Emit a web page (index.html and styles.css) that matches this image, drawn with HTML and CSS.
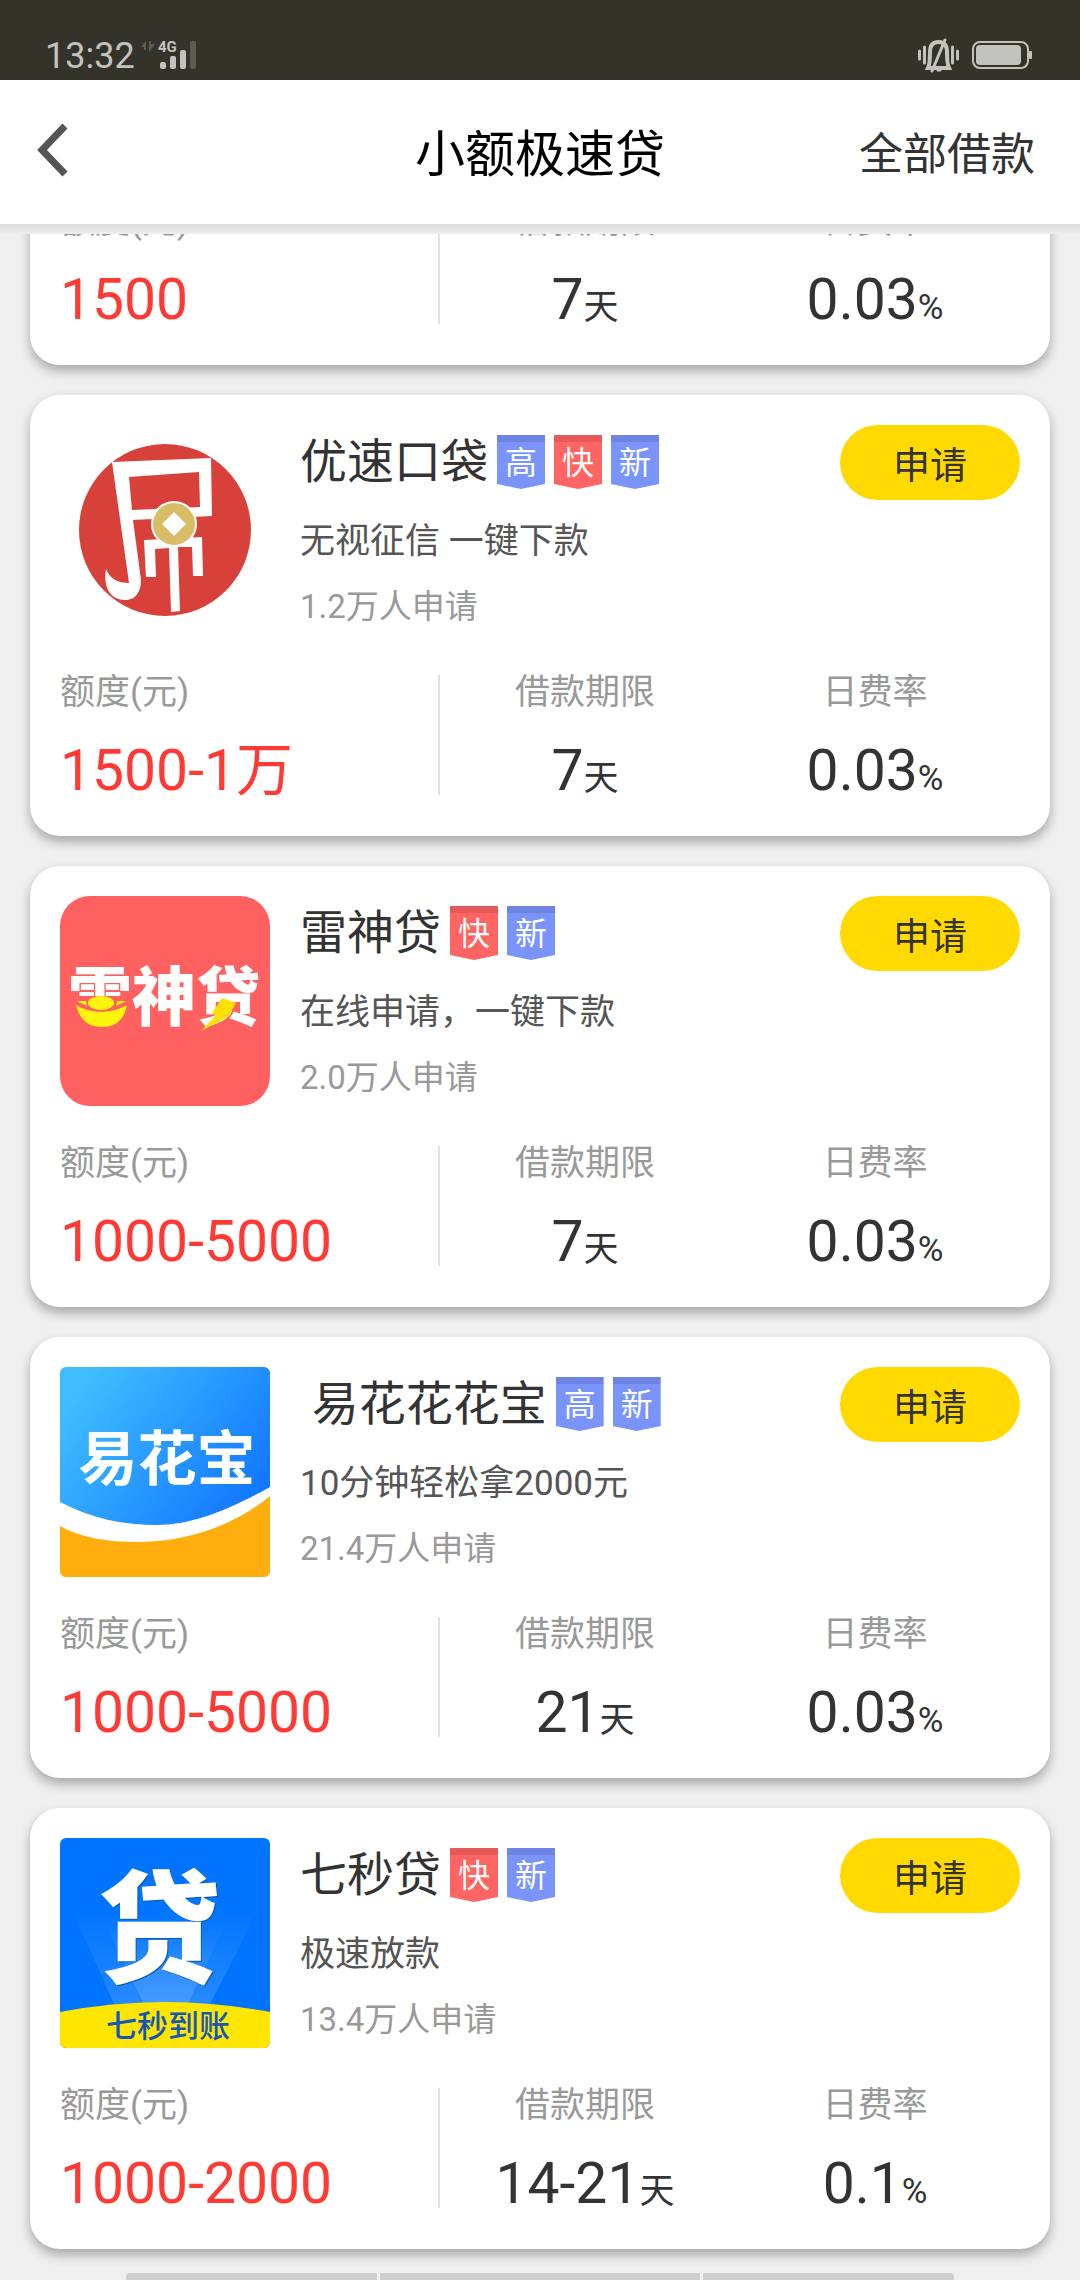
FILE: index.html
```html
<!DOCTYPE html>
<html lang="zh-CN">
<head>
    <meta charset="UTF-8">
    <meta name="viewport" content="width=device-width, initial-scale=1.0">
    <title>小额极速贷</title>
    <link rel="stylesheet" href="styles.css">
</head>
<body>
    <div class="status-bar">
        <span class="time">13:32</span>
        <svg class="signal" width="58" height="32" viewBox="0 0 58 32">
            <path d="M1 7L6 1V10H4V7ZM9 1H11V4H15L9 12Z" fill="#5c5c50"/>
            <text x="18" y="12" class="network">4G</text>
            <rect x="20" y="22" width="6" height="7" rx="2" fill="#c3c3be"/>
            <rect x="30" y="16" width="6" height="13" rx="2" fill="#c3c3be"/>
            <rect x="40" y="10" width="6" height="19" rx="2" fill="#c3c3be"/>
            <rect x="50" y="1" width="6" height="28" rx="2" fill="#5c5c50"/>
        </svg>
        <div class="status-right">
            <svg width="42" height="36" viewBox="0 0 42 36" fill="none" stroke="#c3c3be">
                <path d="M1.500 13V21M6.500 9V25M34.500 9V25M39.500 13V21" stroke-width="3" stroke-linecap="round"/>
                <path d="M10 30C12 26 12 20 12 14C12 7 15 4 20.500 4C26 4 29 7 29 14C29 20 29 26 31 30Z" stroke-width="4"/>
                <path d="M27 2L14 33M20 32H22" stroke-width="3" stroke-linecap="round"/>
            </svg>
            <svg width="61" height="30" viewBox="0 0 61 30">
                <rect x="1" y="1" width="55" height="26" rx="7" fill="none" stroke="#c3c3be" stroke-width="2"/>
                <rect x="4" y="4" width="45" height="20" rx="4" fill="#c3c3be"/>
                <rect x="57" y="10" width="3" height="8" rx="1" fill="#c3c3be"/>
            </svg>
        </div>
    </div>

    <header class="nav-bar">
        <button class="back-btn" aria-label="返回">
            <svg width="34" height="56" viewBox="0 0 34 56">
                <path d="M29 4L6 28L29 52" fill="none" stroke="#555" stroke-width="7"/>
            </svg>
        </button>
        <h1>小额极速贷</h1>
        <a class="all-link" href="#">全部借款</a>
    </header>
    <div class="nav-shadow"></div>

    <main class="loan-list">
        <section class="loan-card">
            <div class="stats">
                <div class="stat amount"><p class="label">额度(元)</p><p class="value">1500</p></div>
                <div class="stat"><p class="label">借款期限</p><p class="value">7<small>天</small></p></div>
                <div class="stat"><p class="label">日费率</p><p class="value">0.03<small>%</small></p></div>
            </div>
        </section>

        <section class="loan-card">
            <div class="card-head">
                <svg class="logo" viewBox="0 0 210 210">
                    <circle cx="105" cy="105" r="86" fill="#d8413a"/>
                    <path fill="#fff" fill-rule="evenodd" d="M52 37L151 33L152 91L73 95L81 155C81 170 73 175 65 175C50 175 43 162 46 144C50 154 58 158 69 158ZM69 52L139 47L140 82L72 85Z"/>
                    <path fill="#fff" d="M84 115L142 112L143 151L133 151L132 122L118 122L120 186L111 187L109 123L95 124L96 152L86 152Z"/>
                    <circle cx="114" cy="99" r="22" fill="#d9bd66" stroke="#fff" stroke-width="2"/>
                    <path fill="#fff" d="M114 87L126 99L114 111L102 99Z"/>
                </svg>
                <div class="info">
                    <div class="name-row">
                        <h2>优速口袋</h2>
                        <span class="tag blue">高</span><span class="tag red">快</span><span class="tag blue">新</span>
                    </div>
                    <p class="desc">无视征信 一键下款</p>
                    <p class="count">1.2万人申请</p>
                </div>
                <button class="apply-btn">申请</button>
            </div>
            <div class="stats">
                <div class="stat amount"><p class="label">额度(元)</p><p class="value">1500-1万</p></div>
                <div class="stat"><p class="label">借款期限</p><p class="value">7<small>天</small></p></div>
                <div class="stat"><p class="label">日费率</p><p class="value">0.03<small>%</small></p></div>
            </div>
        </section>

        <section class="loan-card">
            <div class="card-head">
                <svg class="logo" viewBox="0 0 210 210">
                    <rect width="210" height="210" rx="30" fill="#ff6161"/>
                    <text x="104" y="124" class="logo-text leishen">雷神贷</text>
                    <!-- 元宝 -->
                    <rect x="10" y="100" width="61" height="34" fill="#ff6161"/>
                    <ellipse cx="41" cy="107" rx="13" ry="7" fill="#fff50a"/>
                    <path fill="#fff50a" d="M17 105H26L27 110ZM66 105H57L56 110ZM16 109C30 118 52 118 67 109C64 124 56 131 42 131C28 131 20 124 16 109Z"/>
                    <!-- 闪电 -->
                    <path fill="#ffe100" d="M162 102L176 107L168 121L141 135L156 119L152 117Z"/>
                </svg>
                <div class="info">
                    <div class="name-row">
                        <h2>雷神贷</h2>
                        <span class="tag red">快</span><span class="tag blue">新</span>
                    </div>
                    <p class="desc">在线申请，一键下款</p>
                    <p class="count">2.0万人申请</p>
                </div>
                <button class="apply-btn">申请</button>
            </div>
            <div class="stats">
                <div class="stat amount"><p class="label">额度(元)</p><p class="value">1000-5000</p></div>
                <div class="stat"><p class="label">借款期限</p><p class="value">7<small>天</small></p></div>
                <div class="stat"><p class="label">日费率</p><p class="value">0.03<small>%</small></p></div>
            </div>
        </section>

        <section class="loan-card">
            <div class="card-head">
                <svg class="logo square" viewBox="0 0 210 210">
                    <defs>
                        <linearGradient id="sky" x1="0.1" y1="0.1" x2="0.9" y2="0.7">
                            <stop offset="0" stop-color="#3fbdff"/>
                            <stop offset="1" stop-color="#1176ff"/>
                        </linearGradient>
                    </defs>
                    <rect width="210" height="210" fill="url(#sky)"/>
                    <path fill="#fff" d="M0 135C32 152 65 158 97 158C130 158 165 145 210 120V210H0Z"/>
                    <path fill="#ffae0d" d="M0 159C22 171 46 175 77 175C120 175 170 162 210 129V210H0Z"/>
                    <text x="107" y="113" class="logo-text yihua">易花宝</text>
                </svg>
                <div class="info">
                    <div class="name-row">
                        <h2>&nbsp;易花花花宝</h2>
                        <span class="tag blue">高</span><span class="tag blue">新</span>
                    </div>
                    <p class="desc">10分钟轻松拿2000元</p>
                    <p class="count">21.4万人申请</p>
                </div>
                <button class="apply-btn">申请</button>
            </div>
            <div class="stats">
                <div class="stat amount"><p class="label">额度(元)</p><p class="value">1000-5000</p></div>
                <div class="stat"><p class="label">借款期限</p><p class="value">21<small>天</small></p></div>
                <div class="stat"><p class="label">日费率</p><p class="value">0.03<small>%</small></p></div>
            </div>
        </section>

        <section class="loan-card">
            <div class="card-head">
                <svg class="logo square" viewBox="0 0 210 210">
                    <defs>
                        <linearGradient id="beam" x1="0" y1="0" x2="0" y2="1">
                            <stop offset="0" stop-color="#fff" stop-opacity="0"/>
                            <stop offset="1" stop-color="#fff" stop-opacity="0.16"/>
                        </linearGradient>
                    </defs>
                    <rect width="210" height="210" fill="#0074ff"/>
                    <path fill="url(#beam)" d="M12 72H198L148 170H56Z"/>
                    <path fill="url(#beam)" d="M42 80H168L126 170H86Z"/>
                    <text x="100" y="136" class="logo-text dai-shadow">贷</text>
                    <text x="99" y="135" class="logo-text dai">贷</text>
                    <path fill="#ffe600" d="M0 174Q105 154 210 174V210H0Z"/>
                    <text x="108" y="199" class="logo-text qimiao">七秒到账</text>
                </svg>
                <div class="info">
                    <div class="name-row">
                        <h2>七秒贷</h2>
                        <span class="tag red">快</span><span class="tag blue">新</span>
                    </div>
                    <p class="desc">极速放款</p>
                    <p class="count">13.4万人申请</p>
                </div>
                <button class="apply-btn">申请</button>
            </div>
            <div class="stats">
                <div class="stat amount"><p class="label">额度(元)</p><p class="value">1000-2000</p></div>
                <div class="stat"><p class="label">借款期限</p><p class="value">14-21<small>天</small></p></div>
                <div class="stat"><p class="label">日费率</p><p class="value">0.1<small>%</small></p></div>
            </div>
        </section>
    </main>

    <div class="gesture-bar"><span></span><span></span><span></span></div>
</body>
</html>
```
FILE: styles.css
```css
:root {
    --text-color: #333;
    --sub-color: #555;
    --muted-color: #999;
    --bg-color: #f0f0f0;
    --red: #ff3a34;
    --yellow: #ffd900;
    --status-bg: #333329;
    --status-fg: #c3c3be;
}

* {
    box-sizing: border-box;
    margin: 0;
    padding: 0;
}

body {
    height: 100vh;
    display: flex;
    flex-direction: column;
    background: var(--bg-color);
    color: var(--text-color);
    font-family: Roboto, "Noto Sans CJK SC", sans-serif;
    overflow: hidden;
}

button {
    border: none;
    background: none;
    font-family: inherit;
    color: inherit;
    cursor: pointer;
}

.status-bar {
    flex: none;
    display: flex;
    align-items: center;
    height: 80px;
    padding: 32px 47px 0 45px;
    background: var(--status-bg);
    color: var(--status-fg);
}

.time {
    font-size: 36px;
    line-height: 44px;
    margin-right: 5px;
}

.network {
    font-size: 15px;
    font-weight: 700;
    fill: var(--status-fg);
}

.status-right {
    display: flex;
    align-items: center;
    gap: 12px;
    margin-left: auto;
}

.nav-bar {
    flex: none;
    display: grid;
    grid-template-columns: 1fr auto 1fr;
    align-items: center;
    height: 144px;
    padding: 6px 45px 0;
    background: #fff;
}

.back-btn {
    justify-self: start;
    height: 56px;
    margin: 0 0 10px -9px;
}

.nav-bar h1 {
    font-size: 50px;
    line-height: 72px;
    font-weight: 400;
    color: #000;
}

.all-link {
    justify-self: end;
    font-size: 44px;
    line-height: 72px;
    color: var(--text-color);
    text-decoration: none;
}

.nav-shadow {
    flex: none;
    height: 10px;
    background: linear-gradient(#dcdcdc, #eee);
}

.loan-list {
    flex: 1;
    min-height: 0;
    display: flex;
    flex-direction: column;
    justify-content: flex-end;
    gap: 30px;
    padding: 0 30px 24px;
    overflow: hidden;
}

.loan-card {
    flex: none;
    padding: 30px;
    background: #fff;
    border-radius: 30px;
    box-shadow: 0 6px 12px rgba(0, 0, 0, 0.3);
}

.card-head {
    display: flex;
    align-items: flex-start;
    margin-bottom: 30px;
}

.logo {
    flex: none;
    width: 210px;
    height: 210px;
    margin-right: 30px;
}

.logo.square {
    border-radius: 6px;
}

.logo-text {
    font-family: "Noto Sans CJK SC", sans-serif;
    text-anchor: middle;
    fill: #fff;
}

.leishen {
    font-size: 64px;
    font-weight: 900;
}

.yihua {
    font-size: 59px;
    font-weight: 700;
}

.dai,
.dai-shadow {
    font-size: 122px;
    font-weight: 900;
}

.dai-shadow {
    fill: #0a57b4;
}

.qimiao {
    font-size: 31px;
    font-weight: 500;
    fill: #1557b8;
}

.info {
    flex: 1;
    display: flex;
    flex-direction: column;
    gap: 17px;
}

.name-row {
    display: flex;
    align-items: center;
    gap: 9px;
}

.name-row h2 {
    font-size: 47px;
    line-height: 74px;
    font-weight: 400;
}

.tag {
    width: 48px;
    height: 54px;
    border-top: 7px solid rgba(0, 0, 0, 0.1);
    color: #fff;
    font-size: 32px;
    line-height: 42px;
    text-align: center;
    clip-path: polygon(0 0, 100% 0, 100% 49px, 50% 100%, 0 49px);
}

.tag.blue {
    background: #7a94fc;
}

.tag.red {
    background: #ff6562;
}

.desc {
    font-size: 35px;
    line-height: 52px;
    color: var(--sub-color);
}

.count {
    font-size: 33px;
    line-height: 44px;
    color: var(--muted-color);
}

.apply-btn {
    width: 180px;
    height: 75px;
    border-radius: 38px;
    background: var(--yellow);
    font-size: 37px;
}

.stats {
    display: grid;
    grid-template-columns: 380px 1fr 1fr;
}

.stat {
    text-align: center;
}

.stat.amount {
    position: relative;
    text-align: left;
}

.stat.amount::after {
    content: "";
    position: absolute;
    top: 10px;
    bottom: 11px;
    right: 0;
    width: 2px;
    background: #e2e2e2;
}

.label {
    font-size: 35px;
    line-height: 56px;
    margin-bottom: 14px;
    color: var(--muted-color);
}

.value {
    font-size: 57px;
    line-height: 71px;
}

.value small {
    font-size: 35px;
    line-height: 1;
}

.amount .value {
    color: var(--red);
}

.gesture-bar {
    flex: none;
    display: grid;
    grid-template-columns: 251fr 320fr 251fr;
    gap: 3px;
    height: 7px;
    margin: 0 126px;
    border-radius: 4px 4px 0 0;
    overflow: hidden;
}

.gesture-bar span {
    background: #cfcfcf;
}
```
